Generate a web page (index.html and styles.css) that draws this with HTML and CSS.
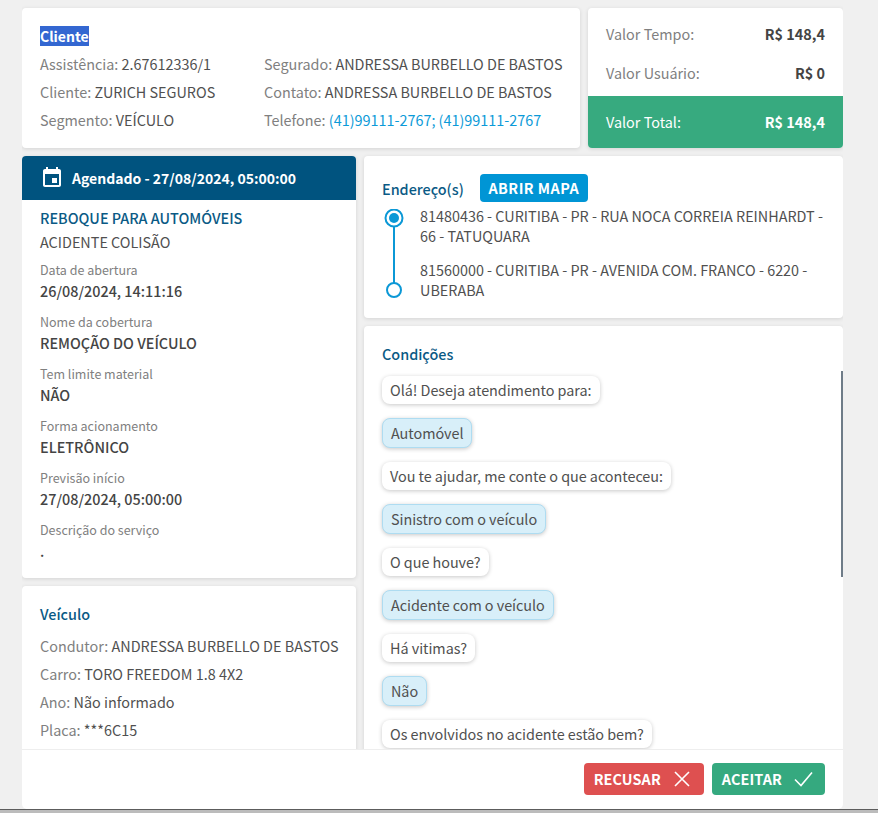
FILE: index.html
```html
<!DOCTYPE html>
<html lang="pt-BR">
<head>
<meta charset="utf-8">
<title>Serviço</title>
<link rel="stylesheet" href="styles.css">
</head>
<body>
<div class="page">
  <main class="main">
    <div class="top-row">
      <section class="card client">
        <h2 class="client-title"><span class="selected">Cliente</span></h2>
        <div class="client-grid">
          <p class="row"><span class="lbl">Assistência:</span> 2.67612336/1</p>
          <p class="row"><span class="lbl">Segurado:</span> ANDRESSA BURBELLO DE BASTOS</p>
          <p class="row"><span class="lbl">Cliente:</span> ZURICH SEGUROS</p>
          <p class="row"><span class="lbl">Contato:</span> ANDRESSA BURBELLO DE BASTOS</p>
          <p class="row"><span class="lbl">Segmento:</span> VEÍCULO</p>
          <p class="row"><span class="lbl">Telefone:</span> <a class="link" href="#">(41)99111-2767; (41)99111-2767</a></p>
        </div>
      </section>
      <section class="card values">
        <div class="value-rows">
          <div class="value-row"><span class="lbl">Valor Tempo:</span><b class="amount">R$ 148,4</b></div>
          <div class="value-row"><span class="lbl">Valor Usuário:</span><b class="amount">R$ 0</b></div>
        </div>
        <div class="value-total"><span>Valor Total:</span><b class="amount-total">R$ 148,4</b></div>
      </section>
    </div>
    <div class="columns">
      <div class="col-left">
        <section class="card service">
          <header class="service-head">
            <svg class="event-icon" viewBox="0 0 24 24" width="24" height="24" aria-hidden="true"><path fill="#fff" d="M17 12h-5v5h5v-5zM16 1v2H8V1H6v2H5c-1.11 0-1.99.9-1.99 2L3 19c0 1.1.89 2 2 2h14c1.1 0 2-.9 2-2V5c0-1.1-.9-2-2-2h-1V1h-2zm3 18H5V8h14v11z"/></svg>
            <span>Agendado - 27/08/2024, 05:00:00</span>
          </header>
          <div class="service-body">
            <h3 class="service-name">REBOQUE PARA AUTOMÓVEIS</h3>
            <p class="service-sub">ACIDENTE COLISÃO</p>
            <dl class="facts">
              <div class="fact"><dt>Data de abertura</dt><dd>26/08/2024, 14:11:16</dd></div>
              <div class="fact"><dt>Nome da cobertura</dt><dd>REMOÇÃO DO VEÍCULO</dd></div>
              <div class="fact"><dt>Tem limite material</dt><dd>NÃO</dd></div>
              <div class="fact"><dt>Forma acionamento</dt><dd>ELETRÔNICO</dd></div>
              <div class="fact"><dt>Previsão início</dt><dd>27/08/2024, 05:00:00</dd></div>
              <div class="fact"><dt>Descrição do serviço</dt><dd>.</dd></div>
            </dl>
          </div>
        </section>
        <section class="card vehicle">
          <h3 class="section-title vehicle-title">Veículo</h3>
          <p class="row"><span class="lbl">Condutor:</span> ANDRESSA BURBELLO DE BASTOS</p>
          <p class="row"><span class="lbl">Carro:</span> TORO FREEDOM 1.8 4X2</p>
          <p class="row"><span class="lbl">Ano:</span> Não informado</p>
          <p class="row"><span class="lbl">Placa:</span> ***6C15</p>
        </section>
      </div>
      <div class="col-right">
        <section class="card address">
          <div class="address-head">
            <h3 class="section-title address-title">Endereço(s)</h3>
            <button class="map-btn" type="button">ABRIR MAPA</button>
          </div>
          <div class="address-body">
            <svg class="route" width="24" height="90" viewBox="0 0 24 90" aria-hidden="true">
              <line x1="12" y1="13" x2="12" y2="74" stroke="#0b98d6" stroke-width="2"/>
              <circle cx="12" cy="9" r="8.5" fill="#fff" stroke="#0b98d6" stroke-width="2"/>
              <circle cx="12" cy="9" r="5" fill="#0b98d6"/>
              <circle cx="12" cy="81" r="7" fill="#fff" stroke="#0b98d6" stroke-width="2"/>
            </svg>
            <div class="address-list">
              <p class="address-item">81480436 - CURITIBA - PR - RUA NOCA CORREIA REINHARDT - 66 - TATUQUARA</p>
              <p class="address-item">81560000 - CURITIBA - PR - AVENIDA COM. FRANCO - 6220 - UBERABA</p>
            </div>
          </div>
        </section>
        <section class="card conditions">
          <h3 class="section-title cond-title">Condições</h3>
          <div class="bubbles">
            <span class="bubble">Olá! Deseja atendimento para:</span>
            <span class="bubble answer">Automóvel</span>
            <span class="bubble">Vou te ajudar, me conte o que aconteceu:</span>
            <span class="bubble answer">Sinistro com o veículo</span>
            <span class="bubble">O que houve?</span>
            <span class="bubble answer">Acidente com o veículo</span>
            <span class="bubble">Há vitimas?</span>
            <span class="bubble answer">Não</span>
            <span class="bubble">Os envolvidos no acidente estão bem?</span>
          </div>
          <div class="thumb"></div>
        </section>
      </div>
    </div>
  </main>
  <footer class="footer">
    <button class="action refuse" type="button">RECUSAR
      <svg width="24" height="24" viewBox="0 0 24 24" aria-hidden="true"><path d="M5 5l14 14M19 5L5 19" fill="none" stroke="#fff" stroke-width="1.6"/></svg>
    </button>
    <button class="action accept" type="button">ACEITAR
      <svg width="24" height="24" viewBox="0 0 24 24" aria-hidden="true"><path d="M4 12.5l6 6L21 5.5" fill="none" stroke="#fff" stroke-width="1.6"/></svg>
    </button>
  </footer>
</div>
<div class="window-edge"></div>
</body>
</html>
```

FILE: styles.css
```css
* { box-sizing: border-box; }
html, body { margin: 0; padding: 0; height: 813px; overflow: hidden; }
body {
  background: #f0f0f0;
  color: #505050;
  font-family: "Noto Sans CJK SC", "Noto Sans", sans-serif;
  font-size: 14.4px;
  line-height: 20px;
}
p, h2, h3, dl, dd { margin: 0; }

.page { height: 809px; padding: 0 35px 0 22px; display: flex; flex-direction: column; }
.main { height: 749px; flex: none; padding-top: 8px; overflow: hidden; display: flex; flex-direction: column; gap: 8px; }
.window-edge { height: 4px; background: #bcbcbc; border-top: 1px solid #5c5c5c; }

.card { background: #fff; border-radius: 4px; box-shadow: 0 1px 4px rgba(0,0,0,.12); }
.lbl { color: #808080; }
.row { height: 28px; line-height: 28px; white-space: nowrap; }

.top-row { display: grid; grid-template-columns: 558px 255px; gap: 8px; height: 140px; flex: none; }
.client { padding: 18px 18px 0; }
.client-title { font-size: 14px; font-weight: 700; line-height: 20px; color: #fff; height: 24px; }
.selected { background: #3367d1; display: inline-block; }
.client-grid { display: grid; grid-template-columns: 224px 1fr; }
.link { color: #0b9ad8; text-decoration: none; }

.values { display: flex; flex-direction: column; overflow: hidden; }
.value-rows { height: 88px; padding: 6px 18px 0; }
.value-row { display: flex; justify-content: space-between; height: 39px; line-height: 40px; }
.amount { color: #444; font-weight: 700; }
.value-total { height: 52px; background: #37aa7f; color: #fff; padding: 0 18px; display: flex; justify-content: space-between; align-items: center; }
.amount-total { font-weight: 700; }

.columns { display: grid; grid-template-columns: 334px 479px; gap: 8px; flex: none; }
.col-left, .col-right { display: flex; flex-direction: column; gap: 8px; }

.service-head { height: 44px; background: #00537f; color: #fff; border-radius: 4px 4px 0 0; display: flex; align-items: center; gap: 8px; padding-left: 18px; font-size: 14px; font-weight: 700; }
.service-body { padding: 8px 18px 17px; }
.service-name { font-size: 14.4px; font-weight: 500; color: #0a5a85; line-height: 20px; }
.service-sub { margin-top: 4px; line-height: 20px; }
.facts { margin-top: 8px; display: flex; flex-direction: column; gap: 11px; }
.fact dt { font-size: 12.5px; line-height: 20px; color: #808080; }
.fact dd { font-weight: 500; line-height: 20px; margin-top: 1px; color: #444; }

.section-title { font-size: 14.4px; font-weight: 500; line-height: 20px; color: #0a5a85; }
.vehicle { padding: 18px 18px 28px; }
.vehicle-title { margin-bottom: 8px; }

.address { height: 162px; padding: 18px 18px 0; }
.address-head { display: flex; align-items: center; gap: 16px; height: 28px; }
.address-title { padding-top: 1px; }
.map-btn { height: 28px; width: 108px; padding: 0; border: 0; border-radius: 4px; background: #0095d5; color: #fff; font: inherit; font-weight: 700; letter-spacing: .45px; }
.address-body { display: flex; gap: 14px; margin-top: 5px; }
.route { flex: none; margin-top: 2px; }
.address-list { display: flex; flex-direction: column; gap: 14px; margin-top: -1px; }
.address-item { line-height: 20px; }

.conditions { position: relative; padding: 18px 18px 14px; flex: 1; }
.cond-title { margin-bottom: 12px; }
.bubbles { display: flex; flex-direction: column; align-items: flex-start; gap: 14px; }
.bubble { height: 28px; line-height: 28px; padding: 0 8px; background: #fff; border-radius: 8px; box-shadow: 0 1px 4px rgba(0,0,0,.22); white-space: nowrap; letter-spacing: -.04px; }
.answer { height: 30px; line-height: 28px; background: #d8eff9; border: 1px solid #aedcf1; }
.thumb { position: absolute; top: 45px; right: 0; width: 2px; height: 206px; background: #6f7c88; }

.footer { height: 60px; flex: none; background: #fff; border-top: 1px solid #eee; border-radius: 0 0 5px 5px; display: flex; justify-content: flex-end; align-items: center; gap: 8px; padding: 0 18px 1px 0; }
.action { height: 32px; border: 0; border-radius: 4px; color: #fff; font: inherit; font-weight: 700; letter-spacing: .1px; display: flex; align-items: center; gap: 9px; padding: 0 10px; }
.refuse { background: #de5050; }
.accept { background: #35a97f; }
```
